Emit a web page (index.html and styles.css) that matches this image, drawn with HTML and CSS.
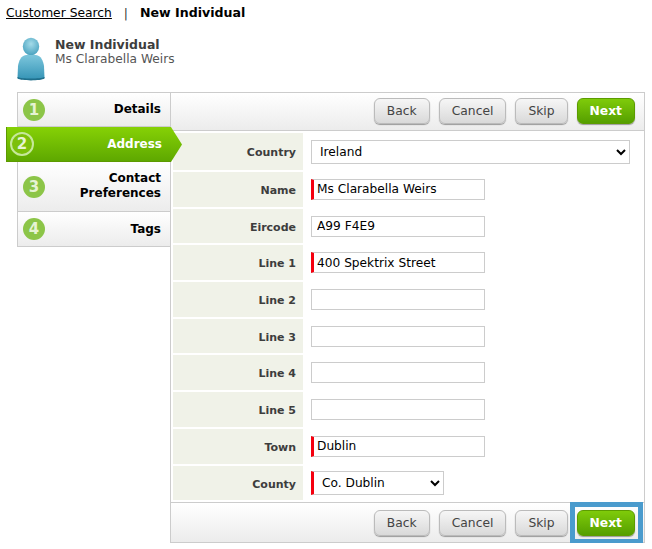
FILE: index.html
```html
<!DOCTYPE html>
<html lang="en">

<head>
  <meta charset="UTF-8">
  <title>New Individual</title>
  <link rel="stylesheet" href="styles.css">
</head>

<body>
  <div class="crumbs">
    <a href="#">Customer Search</a>
    <span class="crumbs-sep">|</span>
    <b>New Individual</b>
  </div>

  <div class="person">
    <svg class="person-icon" width="30" height="46" viewBox="0 0 30 46">
      <defs>
        <radialGradient id="headFill" cx="0.5" cy="0.35" r="0.65">
          <stop offset="0" stop-color="#a4dbe9" />
          <stop offset="1" stop-color="#4aa3c0" />
        </radialGradient>
        <linearGradient id="bodyFill" x1="0" y1="0" x2="0" y2="1">
          <stop offset="0" stop-color="#7cc6dc" />
          <stop offset="1" stop-color="#3594b6" />
        </linearGradient>
      </defs>
      <ellipse cx="15" cy="9.5" rx="8.2" ry="8.7" fill="url(#headFill)" />
      <path d="M10 18h10c5 1 7 5 8 11l.5 12c-4 2-23 2-27 0l.5-12c1-6 3-10 8-11z" fill="url(#bodyFill)" />
      <path d="M1.5 40c4 2 23 2 27 0v1.500c-4 2.500-23 2.500-27 0z" fill="#1f6f8c" />
    </svg>
    <div>
      <div class="person-title">New Individual</div>
      <div class="person-name">Ms Clarabella Weirs</div>
    </div>
  </div>

  <div class="wizard">
    <div class="steps">
      <div class="step step-one"><span class="step-num">1</span><span class="step-label">Details</span></div>
      <div class="step step-active"><span class="step-num">2</span><span class="step-label">Address</span></div>
      <div class="step step-tall"><span class="step-num">3</span><span class="step-label">Contact Preferences</span></div>
      <div class="step step-one"><span class="step-num">4</span><span class="step-label">Tags</span></div>
    </div>

    <div class="panel">
      <div class="toolbar">
        <button class="btn">Back</button>
        <button class="btn">Cancel</button>
        <button class="btn">Skip</button>
        <button class="btn btn-next">Next</button>
      </div>

      <div class="form">
        <div class="row row-first">
          <label>Country</label>
          <div class="field">
            <select class="select-wide"><option>Ireland</option></select>
          </div>
        </div>
        <div class="row">
          <label>Name</label>
          <div class="field"><input class="required" value="Ms Clarabella Weirs"></div>
        </div>
        <div class="row">
          <label>Eircode</label>
          <div class="field"><input value="A99 F4E9"></div>
        </div>
        <div class="row">
          <label>Line 1</label>
          <div class="field"><input class="required" value="400 Spektrix Street"></div>
        </div>
        <div class="row">
          <label>Line 2</label>
          <div class="field"><input></div>
        </div>
        <div class="row">
          <label>Line 3</label>
          <div class="field"><input></div>
        </div>
        <div class="row">
          <label>Line 4</label>
          <div class="field"><input></div>
        </div>
        <div class="row">
          <label>Line 5</label>
          <div class="field"><input></div>
        </div>
        <div class="row">
          <label>Town</label>
          <div class="field"><input class="required" value="Dublin"></div>
        </div>
        <div class="row">
          <label>County</label>
          <div class="field">
            <select class="select-county required"><option>Co. Dublin</option></select>
          </div>
        </div>
      </div>

      <div class="toolbar toolbar-bottom">
        <button class="btn">Back</button>
        <button class="btn">Cancel</button>
        <button class="btn">Skip</button>
        <button class="btn btn-next btn-highlight">Next</button>
      </div>
    </div>
  </div>
</body>

</html>
```

FILE: styles.css
```css
* {
  box-sizing: border-box;
}

body {
  margin: 0;
  padding: 5px 6px 0;
  background: #fff;
  color: #000;
  font-family: "DejaVu Sans", Verdana, sans-serif;
  font-size: 12px;
}

.crumbs {
  height: 16px;
  line-height: 16px;
  font-size: 12.3px;
}

.crumbs a {
  color: #000;
}

.crumbs b {
  font-size: 12.6px;
}

.crumbs-sep {
  margin: 0 8px;
  color: #333;
}

.person {
  display: flex;
  column-gap: 9px;
  margin-top: 16px;
  margin-left: 10px;
  height: 55px;
}

.person-icon {
  flex-shrink: 0;
}

.person-title {
  font-size: 12.5px;
  font-weight: 700;
  color: #3d3d3d;
  line-height: 15px;
}

.person-name {
  font-size: 12.2px;
  color: #555;
  line-height: 15px;
}

.wizard {
  display: flex;
  align-items: flex-start;
}

.steps {
  width: 165px;
  flex-shrink: 0;
}

.step {
  display: flex;
  align-items: center;
  justify-content: space-between;
  margin-left: 11px;
  padding: 0 9px 0 5px;
  border: 1px solid #ccc;
  border-top: 0;
  background: linear-gradient(#fff, #ececec);
  font-weight: 700;
  text-align: right;
}

.step:first-child {
  border-top: 1px solid #ccc;
}

.step-one {
  height: 35px;
}

.step-tall {
  height: 50px;
  padding-bottom: 2px;
}

.step-num {
  width: 22px;
  height: 22px;
  flex-shrink: 0;
  border-radius: 50%;
  background: #8cc548;
  color: #e6f3d4;
  font-size: 15px;
  line-height: 22px;
  text-align: center;
}

.step-tall .step-num {
  margin-top: 2px;
}

.step-label {
  line-height: 15px;
}

.step-active {
  position: relative;
  z-index: 1;
  height: 35px;
  margin-left: 0;
  padding: 0 9px 0 3px;
  border: 0;
  border-left: 1px solid #5d9a00;
  border-bottom: 1px solid #5d9a00;
  background: linear-gradient(#86d106, #5ea800);
  color: #fff;
}

.step-active::after {
  content: "";
  position: absolute;
  top: 0;
  right: -11px;
  width: 11px;
  height: 35px;
  background: linear-gradient(#86d106, #5ea800);
  clip-path: polygon(0 0, 100% 50%, 0 100%);
}

.step-active .step-num {
  width: 24px;
  height: 24px;
  border: 2px solid #c6e89a;
  background: #7cc00a;
  line-height: 20px;
}

.panel {
  width: 475px;
  margin-left: -1px;
  border: 1px solid #ccc;
}

.toolbar {
  display: flex;
  justify-content: flex-end;
  align-items: center;
  column-gap: 9px;
  height: 38px;
  padding-right: 9px;
  padding-bottom: 1px;
  border-bottom: 1px solid #ccc;
  background: linear-gradient(#fff, #ececec);
}

.toolbar-bottom {
  height: 40px;
  padding-bottom: 0;
  border-top: 1px solid #ccc;
  border-bottom: 0;
}

.btn {
  height: 26px;
  padding: 0 12px;
  border: 1px solid #bbb;
  border-radius: 6px;
  background: linear-gradient(#f6f6f6, #d9d9d9);
  box-shadow: 0 1px 1px #999;
  color: #444;
  font-family: inherit;
  font-size: 12.3px;
}

.btn-next {
  border-color: #5c9c00;
  background: linear-gradient(#7fcb0a, #559f00);
  color: #fff;
  font-weight: 700;
}

.btn-highlight {
  position: relative;
}

.btn-highlight::after {
  content: "";
  position: absolute;
  top: -9px;
  right: -9px;
  bottom: -9px;
  left: -8px;
  border: 5px solid #4a9bcd;
  pointer-events: none;
}

.form {
  display: flex;
  flex-direction: column;
  row-gap: 2px;
  padding: 2px 0;
}

.row {
  display: flex;
  align-items: center;
  height: 34.7px;
}

.row-first {
  height: 37px;
}

.row label {
  width: 130px;
  height: 100%;
  margin-left: 2px;
  padding-right: 7px;
  background: #f0f2e8;
  color: #3d3d3d;
  font-size: 11px;
  font-weight: 700;
  text-align: right;
  line-height: 37px;
}

.row-first label {
  line-height: 40px;
}

.field {
  padding-left: 8px;
}

input,
select {
  border: 1px solid #ccc;
  border-radius: 0;
  background-color: #fff;
  color: #000;
  font-family: inherit;
  font-size: 12.2px;
}

input {
  display: block;
  width: 174px;
  height: 21px;
  padding: 0 5px;
}

select {
  display: block;
  height: 24px;
  padding: 0 4px;
}

.select-wide {
  width: 319px;
}

.select-county {
  width: 133px;
}

.required {
  border-left: 3px solid #f5000f;
}

input.required {
  padding-left: 3px;
}
```
